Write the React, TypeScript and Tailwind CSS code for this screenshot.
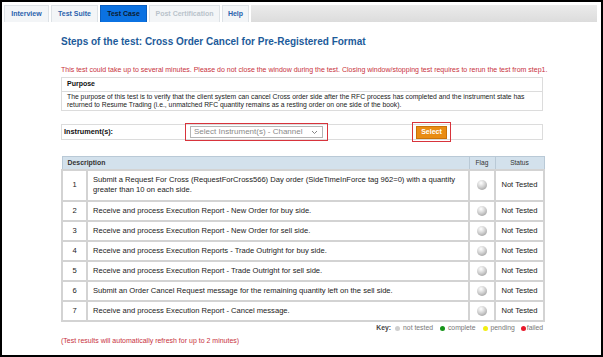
import React from "react";

const steps = [
  "Submit a Request For Cross (RequestForCross566) Day order (SideTimeInForce tag 962=0) with a quantity greater than 10 on each side.",
  "Receive and process Execution Report - New Order for buy side.",
  "Receive and process Execution Report - New Order for sell side.",
  "Receive and process Execution Reports - Trade Outright for buy side.",
  "Receive and process Execution Report - Trade Outright for sell side.",
  "Submit an Order Cancel Request message for the remaining quantity left on the sell side.",
  "Receive and process Execution Report - Cancel message.",
];

function Sphere() {
  return (
    <span className="inline-block w-[10px] h-[10px] rounded-full bg-[radial-gradient(circle_at_40%_30%,#ffffff,#d2d2d2_45%,#8e8e8e)]" />
  );
}

export default function App() {
  const tabs = [
    { label: "Interview", w: "w-[45px]", kind: "normal" },
    { label: "Test Suite", w: "w-[47px]", kind: "normal" },
    { label: "Test Case", w: "w-[47px]", kind: "active" },
    { label: "Post Certification", w: "w-[71px]", kind: "disabled" },
    { label: "Help", w: "w-[27px]", kind: "normal" },
  ];
  return (
    <div className="w-[603px] h-[357px] bg-white border-2 border-black overflow-hidden font-['Liberation_Sans',Arial,sans-serif]">
      {/* tabs */}
      <div className="flex pt-[3px] pl-[2px] pr-[4px] h-[20px]">
        {tabs.map((t) => (
          <div
            key={t.label}
            className={
              "h-[17px] mr-[2px] flex items-center justify-center text-[7px] font-bold border border-b-0 " +
              t.w +
              " " +
              (t.kind === "active"
                ? "bg-[#0b72e2] border-[#0a5fc0] text-[#0c1c33]"
                : t.kind === "disabled"
                ? "bg-[#f3f5f7] border-[#dde2e6] text-[#b9c3cb]"
                : "bg-[#f3f5f7] border-[#dde2e6] text-[#2a62ad]")
            }
          >
            {t.label}
          </div>
        ))}
        <div className="flex-1 h-[17px] bg-[linear-gradient(#ebebeb,#dcdcdc)]" />
      </div>

      <div className="ml-[59px] w-[482px]">
        <div className="mt-[13px] h-[14px] leading-[14px] text-[10px] font-bold text-[#1d5b9a]">
          Steps of the test: Cross Order Cancel for Pre-Registered Format
        </div>
        <div className="mt-[16px] h-[9px] leading-[9px] text-[7px] text-[#c8323e] whitespace-nowrap">
          This test could take up to several minutes. Please do not close the window during the test. Closing window/stopping test requires to rerun the test from step1.
        </div>

        {/* purpose */}
        <div className="mt-[3px] border border-[#dcdcdc]">
          <div className="h-[14px] flex items-center pl-[5px] text-[7px] font-bold text-[#111] border-b border-[#dcdcdc]">
            Purpose
          </div>
          <div className="h-[18px] pl-[5px] pr-[8px] pt-[1px] text-[6.8px] leading-[7.5px] text-[#222]">
            The purpose of this test is to verify that the client system can cancel Cross order side after the RFC process has completed and the instrument state has returned to Resume Trading (i.e., unmatched RFC quantity remains as a resting order on one side of the book).
          </div>
        </div>

        {/* instrument */}
        <div className="mt-[13px] h-[16px] border border-[#dcdcdc] flex items-center">
          <div className="w-[123px] pl-[2px] text-[7.3px] font-bold text-[#111]">Instrument(s):</div>
          <div className="w-[143px] h-[18px] border border-[#d8343c] flex items-center pl-[4px]">
            <div className="w-[133px] h-[12px] border border-[#b5b5b5] bg-white flex items-center justify-between pl-[3px] pr-[4px]">
              <span className="text-[8px] text-[#8a8a8a] whitespace-nowrap">Select Instrument(s) - Channel</span>
              <svg width="7" height="5" viewBox="0 0 7 5">
                <path d="M1 1 L3.5 3.5 L6 1" fill="none" stroke="#777" strokeWidth="0.9" />
              </svg>
            </div>
          </div>
          <div className="w-[84px]" />
          <div className="w-[39px] h-[20px] border border-[#d8343c] flex items-center justify-center">
            <div className="w-[31px] h-[13px] bg-[#e98c14] border border-[#c97208] flex items-center justify-center text-[7px] font-bold text-white">
              Select
            </div>
          </div>
        </div>

        {/* table */}
        <table className="mt-[16px] w-[482px] table-fixed border-collapse text-[7.6px] text-[#222]">
          <colgroup>
            <col className="w-[25px]" />
            <col className="w-[382px]" />
            <col className="w-[26px]" />
            <col className="w-[49px]" />
          </colgroup>
          <thead>
            <tr className="h-[13px] bg-[#d3e1ec]">
              <th colSpan={2} className="border border-[#b9c9d6] text-left pl-[5px] font-bold text-[6.9px] text-[#333]">
                Description
              </th>
              <th className="border border-[#b9c9d6] font-normal text-[6.6px] text-[#333]">Flag</th>
              <th className="border border-[#b9c9d6] font-normal text-[6.6px] text-[#333]">Status</th>
            </tr>
          </thead>
          <tbody>
            {steps.map((s, i) => (
              <tr key={i} className={i === 0 ? "h-[31px]" : "h-[20px]"}>
                <td className="border-2 border-[#d3d3d3] text-center">{i + 1}</td>
                <td className="border-2 border-[#d3d3d3] pl-[5px] pr-[6px] leading-[10px]">{s}</td>
                <td className="border-2 border-[#d3d3d3] text-center align-middle">
                  <div className="flex justify-center">
                    <Sphere />
                  </div>
                </td>
                <td className="border-2 border-[#d3d3d3] text-center whitespace-nowrap text-[#1a1a1a]">Not Tested</td>
              </tr>
            ))}
          </tbody>
        </table>

        {/* key */}
        <div className="mt-[2px] h-[9px] flex items-center justify-end text-[6.8px] text-[#777]">
          <span className="font-bold text-[#444] mr-[4px]">Key:</span>
          <span className="w-[5px] h-[5px] rounded-full bg-[#cfcfcf] mr-[3px]" />
          <span className="mr-[7px]">not tested</span>
          <span className="w-[5px] h-[5px] rounded-full bg-[#17941a] mr-[3px]" />
          <span className="mr-[7px]">complete</span>
          <span className="w-[5px] h-[5px] rounded-full bg-[#f2ee12] mr-[3px]" />
          <span className="mr-[6px]">pending</span>
          <span className="w-[5px] h-[5px] rounded-full bg-[#e8182a] mr-[1px]" />
          <span>failed</span>
        </div>

        <div className="mt-[3px] h-[9px] leading-[9px] text-[7px] text-[#c8323e]">
          (Test results will automatically refresh for up to 2 minutes)
        </div>
      </div>
    </div>
  );
}
